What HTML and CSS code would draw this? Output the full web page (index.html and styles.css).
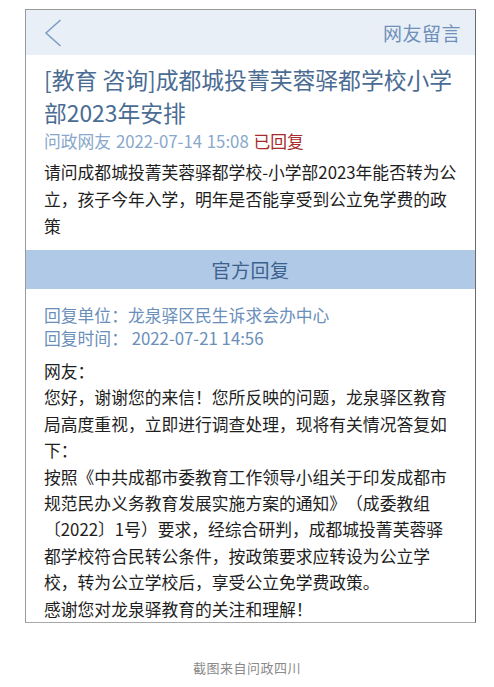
FILE: index.html
```html
<!DOCTYPE html>
<html lang="zh-CN">
<head>
<meta charset="utf-8">
<link rel="stylesheet" href="styles.css">
</head>
<body>
<div class="page">
  <div class="card">
    <div class="topbar">
      <svg class="back" width="18" height="28" viewBox="0 0 18 28"><path d="M16.5 1 L2 14 L16.5 27" fill="none" stroke="#7c9ec6" stroke-width="1.6"/></svg>
      <span class="topbar-title">网友留言</span>
    </div>
    <div class="question">
      <h1 class="title">[教育 咨询]成都城投菁芙蓉驿都学校小学部2023年安排</h1>
      <div class="meta">问政网友 2022-07-14 15:08 <span class="status">已回复</span></div>
      <p class="body">请问成都城投菁芙蓉驿都学校-小学部2023年能否转为公立，孩子今年入学，明年是否能享受到公立免学费的政策</p>
    </div>
    <div class="band">官方回复</div>
    <div class="reply">
      <div class="info">回复单位：龙泉驿区民生诉求会办中心</div>
      <div class="info">回复时间：&nbsp;2022-07-21 14:56</div>
      <div class="reply-text">
        <p>网友：</p>
        <p>您好，谢谢您的来信！您所反映的问题，龙泉驿区教育局高度重视，立即进行调查处理，现将有关情况答复如下：</p>
        <p>按照《中共成都市委教育工作领导小组关于印发成都市规范民办义务教育发展实施方案的通知》（成委教组〔2022〕1号）要求，经综合研判，成都城投菁芙蓉驿都学校符合民转公条件，按政策要求应转设为公立学校，转为公立学校后，享受公立免学费政策。</p>
        <p>感谢您对龙泉驿教育的关注和理解！</p>
      </div>
    </div>
  </div>
  <div class="caption">截图来自问政四川</div>
</div>
</body>
</html>
```

FILE: styles.css
```css
html, body {
  margin: 0;
  padding: 0;
  background: #ffffff;
}
body {
  font-family: "Noto Sans CJK SC", "Noto Sans", sans-serif;
  text-spacing-trim: space-all;
}
.page {
  padding: 9px 0 0 25px;
  width: 451px;
}
.card {
  border: 1px solid #9a9a9a;
  border-bottom-color: #a8a8a8;
  border-right-color: #6a6a6a;
  background: #fff;
}
.topbar {
  height: 45px;
  background: #e9eff7;
  display: flex;
  align-items: center;
  justify-content: space-between;
  padding: 0 14px 0 18px;
}
.back {
  display: block;
  margin-top: 1px;
}
.topbar-title {
  font-size: 19px;
  color: #6e90b9;
  letter-spacing: 0.5px;
}
.question {
  padding: 8px 17px 0 18px;
}
.title {
  margin: 0;
  font-weight: normal;
  font-size: 22.8px;
  line-height: 33px;
  color: #4a6c93;
}
.meta {
  font-size: 16.8px;
  line-height: 25px;
  color: #89a8cb;
  word-spacing: 1px;
}
.status {
  color: #a82a2a;
}
.body {
  margin: 5px 0 0 0;
  font-size: 16.8px;
  line-height: 27px;
  color: #1e1e1e;
}
.band {
  margin-top: 10px;
  height: 39px;
  background: #afc9e6;
  display: flex;
  align-items: center;
  justify-content: center;
  font-size: 19px;
  color: #3c618c;
  letter-spacing: 0.5px;
}
.reply {
  padding: 15px 17px 0 18px;
}
.info {
  font-size: 16.8px;
  line-height: 23px;
  color: #6a8fba;
}
.reply-text {
  margin-top: 8px;
  font-size: 16.8px;
  line-height: 26.4px;
  color: #1e1e1e;
}
.reply-text p {
  margin: 0;
}
.caption {
  margin-top: 35px;
  padding-left: 168px;
  font-size: 13px;
  color: #8a8a8a;
  letter-spacing: 0.5px;
}
```
